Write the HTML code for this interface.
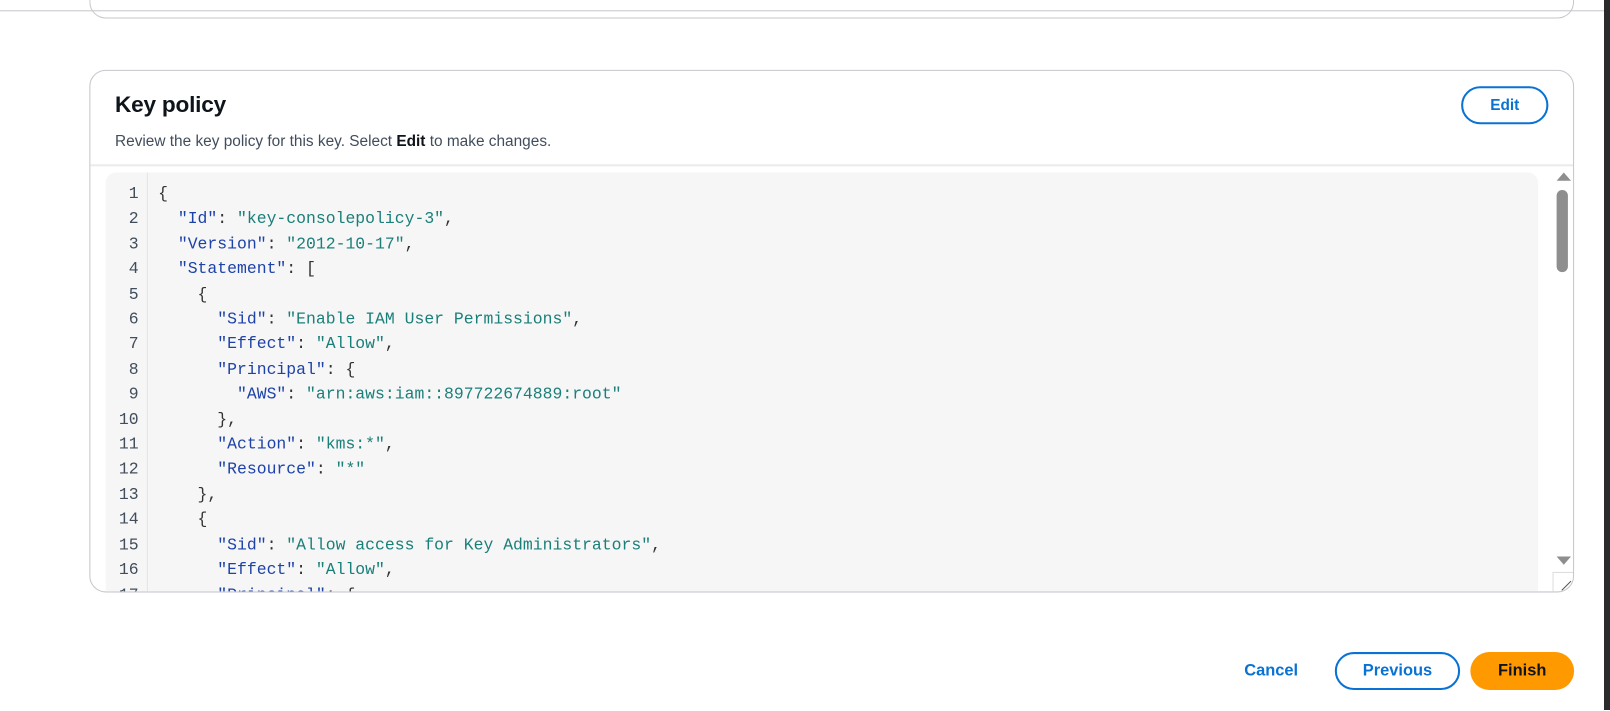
<!DOCTYPE html>
<html><head><meta charset="utf-8"><style>
*{box-sizing:border-box;margin:0;padding:0}
body{width:1610px;height:710px;background:#fff;position:relative;overflow:hidden;font-family:"Liberation Sans",sans-serif;color:#0f141a}
#w{position:absolute;left:0;top:0;width:1568px;height:692px;transform:scale(1.02679);transform-origin:0 0}
.topline{position:absolute;left:0;top:10px;width:1565px;height:1px;background:#c6c6cd}
.prevcard{position:absolute;left:87px;top:-20px;width:1446px;height:38px;border:1px solid #c6c6cd;border-top:none;border-radius:0 0 16px 16px}
.card{position:absolute;left:87px;top:68px;width:1446px;height:509px;border:1px solid #c6c6cd;border-radius:16px;overflow:hidden}
h2{position:absolute;left:24px;top:20px;font-size:22px;font-weight:bold;letter-spacing:-0.2px}
.desc{position:absolute;left:24px;top:60px;font-size:15px;color:#414d5c}
.edit{position:absolute;left:1335px;top:15px;width:85px;height:37px;border:2px solid #0972d3;border-radius:20px;color:#0972d3;font-weight:bold;font-size:15px;text-align:center;line-height:33px}
.sep{position:absolute;left:0;top:91px;width:100%;height:2px;background:#e9ebed}
.code{position:absolute;left:15px;top:99px;width:1395px;height:420px;background:#f6f6f6;border-radius:10px 10px 0 0;overflow:hidden}
.gut{position:absolute;left:40px;top:0;width:1px;height:100%;background:#e4e4e4}
pre{position:absolute;top:9px;font-family:"Liberation Mono",monospace;font-size:16px;line-height:24.4px}
.nums{left:0;width:32px;text-align:right;color:#414d5c}
.src{left:51px;color:#333}
.k{color:#1e43a8}.s{color:#1b7f79}
.sb{position:absolute;left:1425px;top:93px;width:20px;height:420px}
.thumb{position:absolute;left:1428px;top:116px;width:11px;height:80px;border-radius:6px;background:#8e8e8e}
.rz{position:absolute;left:1424px;top:488px;width:20px;height:20px;border-left:1px solid #ddd;border-top:1px solid #ddd}
.btn{position:absolute;top:635px;height:37px;border-radius:20px;font-weight:bold;font-size:16px;text-align:center}
.dark{position:absolute;left:1604px;top:0;width:6px;height:710px;background:#2b2b2b}
</style></head><body>
<div id="w">
<div class="topline"></div>
<div class="prevcard"></div>
<div class="card">
<h2>Key policy</h2>
<div class="desc">Review the key policy for this key. Select <b style="color:#0f141a">Edit</b> to make changes.</div>
<div class="edit">Edit</div>
<div class="sep"></div>
<div class="code"><div class="gut"></div>
<pre class="nums">1
2
3
4
5
6
7
8
9
10
11
12
13
14
15
16
17</pre>
<pre class="src">{
  <span class="k">"Id"</span>: <span class="s">"key-consolepolicy-3"</span>,
  <span class="k">"Version"</span>: <span class="s">"2012-10-17"</span>,
  <span class="k">"Statement"</span>: [
    {
      <span class="k">"Sid"</span>: <span class="s">"Enable IAM User Permissions"</span>,
      <span class="k">"Effect"</span>: <span class="s">"Allow"</span>,
      <span class="k">"Principal"</span>: {
        <span class="k">"AWS"</span>: <span class="s">"arn:aws:iam::897722674889:root"</span>
      },
      <span class="k">"Action"</span>: <span class="s">"kms:*"</span>,
      <span class="k">"Resource"</span>: <span class="s">"*"</span>
    },
    {
      <span class="k">"Sid"</span>: <span class="s">"Allow access for Key Administrators"</span>,
      <span class="k">"Effect"</span>: <span class="s">"Allow"</span>,
      <span class="k">"Principal"</span>: {</pre>
</div>
<svg class="sb" width="20" height="420"><path d="M3 14 L10 6 L17 14Z" fill="#8e8e8e"/><path d="M3 380 L10 388 L17 380Z" fill="#8e8e8e"/></svg>
<div class="thumb"></div>
<div class="rz"><svg width="20" height="20"><path d="M8 17 L17 8 M12 17 L17 12" stroke="#555" stroke-width="1"/></svg></div>
</div>
<div class="btn" style="left:1195px;width:86px;color:#0972d3;line-height:37px">Cancel</div>
<div class="btn" style="left:1300px;width:122px;border:2px solid #0972d3;color:#0972d3;line-height:33px">Previous</div>
<div class="btn" style="left:1432px;width:101px;background:#ff9900;color:#0f141a;line-height:37px">Finish</div>
</div>
<div class="dark"></div>
</body></html>
